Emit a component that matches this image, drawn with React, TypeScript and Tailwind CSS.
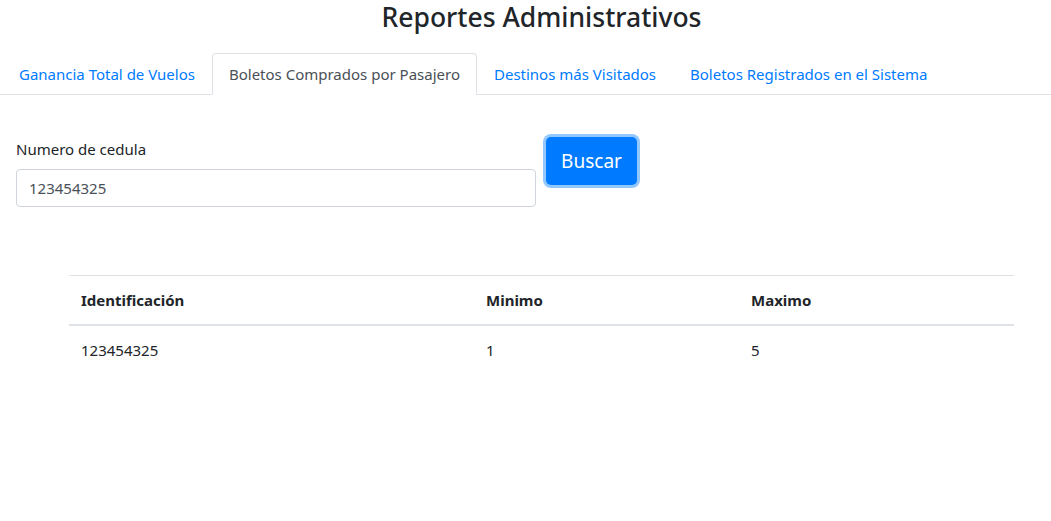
import { useState } from 'react';

const tabs = [
  'Ganancia Total de Vuelos',
  'Boletos Comprados por Pasajero',
  'Destinos más Visitados',
  'Boletos Registrados en el Sistema',
];

const rows = [{ id: '123454325', min: 1, max: 5 }];

export default function App() {
  const [active, setActive] = useState(1);
  const [cedula, setCedula] = useState('123454325');

  return (
    <div className="min-h-screen bg-white font-['Noto_Sans',sans-serif] text-[15px] text-[#212529]">
      <h2 className="pl-[32px] pt-[2px] text-center text-[26.5px] font-medium leading-[1.2]">Reportes Administrativos</h2>

      {/* tabs */}
      <nav className="mt-[19px] flex border-b border-[#dee2e6] pl-[2px]">
        {tabs.map((t, i) => (
          <button
            key={t}
            onClick={() => setActive(i)}
            className={
              i === active
                ? '-mb-px rounded-t-[4px] border border-[#dee2e6] border-b-white bg-white px-4 py-2 leading-6 text-[#495057]'
                : '-mb-px rounded-t-[4px] border border-transparent px-4 py-2 leading-6 text-[#007bff]'
            }
          >
            {t}
          </button>
        ))}
      </nav>

      {/* search form */}
      <div className="mt-[42px] flex items-start px-4">
        <div className="w-[520px]">
          <label htmlFor="cedula" className="mb-2 block leading-6">Numero de cedula</label>
          <input
            id="cedula"
            value={cedula}
            onChange={(e) => setCedula(e.target.value)}
            className="block h-[38px] w-full rounded-[4px] border border-[#ced4da] px-3 text-[#495057] outline-none"
          />
        </div>
        <button className="ml-[10px] h-[48px] w-[91px] rounded-[5px] bg-[#007bff] text-[19px] leading-[1.5] text-white shadow-[0_0_0_3px_rgba(38,143,255,0.5)]">
          Buscar
        </button>
      </div>

      {/* results */}
      <div className="ml-[69px] mt-[68px] w-[945px]">
        <table className="w-full border-collapse text-left">
          <thead>
            <tr>
              <th className="w-[405px] border-t border-b-2 border-[#dee2e6] p-3 font-bold leading-6">Identificación</th>
              <th className="w-[265px] border-t border-b-2 border-[#dee2e6] p-3 font-bold leading-6">Minimo</th>
              <th className="border-t border-b-2 border-[#dee2e6] p-3 font-bold leading-6">Maximo</th>
            </tr>
          </thead>
          <tbody>
            {rows.map((r) => (
              <tr key={r.id}>
                <td className="p-3 leading-6">{r.id}</td>
                <td className="p-3 leading-6">{r.min}</td>
                <td className="p-3 leading-6">{r.max}</td>
              </tr>
            ))}
          </tbody>
        </table>
      </div>
    </div>
  );
}
